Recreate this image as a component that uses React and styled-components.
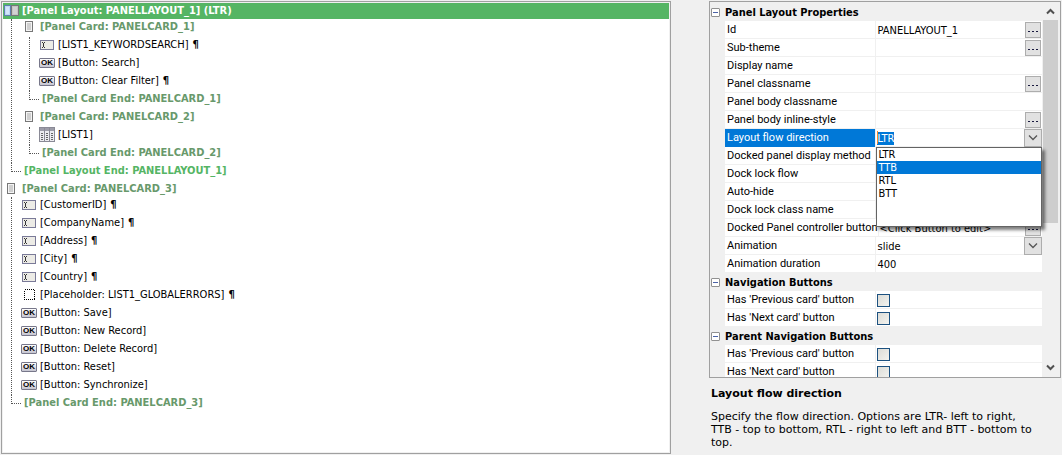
import styled, { createGlobalStyle } from 'styled-components';

const GlobalStyle = createGlobalStyle`
    * {
        box-sizing: border-box;
    }

    body {
        margin: 0;
        background: #f0f0f0;
        color: #000;
        font-family: Tahoma, "DejaVu Sans Condensed", "Noto Sans", sans-serif;
        font-size: 11px;
    }

    ul {
        margin: 0;
        padding: 0;
        list-style: none;
    }
`;

const Page = styled.main`
    display: grid;
    grid-template-columns: 670fr 352fr;
    column-gap: 38px;
    height: 100vh;
    padding: 1px;
`;

/* ---------- control tree ---------- */

const TreePanel = styled.section`
    min-width: 0;
    overflow: hidden;
    padding: 1px;
    border: 1px solid #a0a0a0;
    background: #fff;
    box-shadow: inset 0 0 0 1px #f0f0f0;
`;

const Branch = styled.ul`
    margin-left: 8px;
    padding-left: 9px;
    border-left: 1px dotted #555;
`;

const Row = styled.div`
    display: flex;
    align-items: center;
    height: ${({ $root }) => ($root ? '16px' : '18px')};
    padding-bottom: ${({ $root }) => ($root ? '1px' : '3px')};
    background: ${({ $selected }) => ($selected ? '#55b564' : 'transparent')};
    white-space: nowrap;
`;

const IconSlot = styled.span`
    display: flex;
    justify-content: center;
    flex: none;
    width: 16px;
    margin-right: 3px;

    svg {
        flex: none;
    }
`;

const Name = styled.span`
    color: ${({ $color }) => $color || '#000'};
    font-weight: ${({ $color }) => ($color ? 'bold' : 'normal')};
`;

const LineBreak = styled.span`
    margin-left: 4px;
    font-weight: bold;
`;

const EndRow = styled.div`
    display: flex;
    height: 18px;
    margin-left: 8px;
    line-height: 15px;
    white-space: nowrap;
`;

const Elbow = styled.span`
    width: 10px;
    height: 9px;
    margin-right: 3px;
    border-left: 1px dotted #555;
    border-bottom: 1px dotted #555;
`;

const GREEN = '#55b564';
const SAGE = '#68996b';

const LayoutIcon = () => (
    <svg width="15" height="11" viewBox="0 0 15 11" shapeRendering="crispEdges">
        <rect x="0.5" y="0.5" width="6" height="10" fill="#bcd8f5" stroke="#5f7fae" />
        <rect x="2" y="2" width="3" height="7" fill="#d3e6fa" />
        <rect x="7.5" y="0.5" width="7" height="10" fill="#c4c4c4" stroke="#777" />
        <rect x="9" y="2" width="4" height="7" fill="#d2d2d2" />
    </svg>
);

const CardIcon = () => (
    <svg width="8" height="11" viewBox="0 0 8 11" shapeRendering="crispEdges">
        <rect x="0.5" y="0.5" width="7" height="10" fill="#f4f4f4" stroke="#777" />
        <rect x="2" y="2" width="4" height="7" fill="#cfcfcf" />
    </svg>
);

const FieldIcon = () => (
    <svg width="14" height="10" viewBox="0 0 14 10" shapeRendering="crispEdges">
        <rect x="0.5" y="0.5" width="13" height="9" fill="#ecebe6" stroke="#7a7a98" />
        <path d="M2 2.5h1M4 2.5h1M3.5 3v4M2 7.5h1M4 7.5h1" stroke="#333" fill="none" />
    </svg>
);

const OkIcon = styled.span`
    flex: none;
    width: 16px;
    height: 10px;
    border: 1px solid #77778a;
    border-radius: 1px;
    background: linear-gradient(#fff, #c4c4d0);
    font: bold 8px/8px "Liberation Sans", sans-serif;
    text-align: center;
`;

const ListIcon = () => (
    <svg width="16" height="15" viewBox="0 0 16 15" shapeRendering="crispEdges">
        <rect x="0.5" y="0.5" width="15" height="14" fill="#ececf0" stroke="#8a8a96" />
        <rect x="1" y="1" width="14" height="3" fill="#9c9ca8" />
        <path d="M5.5 1v13M10.5 1v13" stroke="#8a8a96" />
        <path d="M2 6.5h2M7 6.5h2M12 6.5h2M2 8.5h2M7 8.5h2M12 8.5h2M2 10.5h2M7 10.5h2M12 10.5h2M2 12.5h2M7 12.5h2M12 12.5h2" stroke="#666" />
    </svg>
);

const PlaceholderIcon = () => (
    <svg width="11" height="11" viewBox="0 0 11 11" shapeRendering="crispEdges">
        <rect x="0.5" y="0.5" width="10" height="10" fill="none" stroke="#000" strokeDasharray="1 1" />
    </svg>
);

const icons = {
    layout: <LayoutIcon />,
    card: <CardIcon />,
    field: <FieldIcon />,
    button: <OkIcon>OK</OkIcon>,
    list: <ListIcon />,
    placeholder: <PlaceholderIcon />,
};

const tree = [
    {
        icon: 'layout',
        name: '[Panel Layout: PANELLAYOUT_1] (LTR)',
        color: '#fff',
        selected: true,
        end: '[Panel Layout End: PANELLAYOUT_1]',
        endColor: GREEN,
        children: [
            {
                icon: 'card',
                name: '[Panel Card: PANELCARD_1]',
                color: SAGE,
                end: '[Panel Card End: PANELCARD_1]',
                endColor: SAGE,
                children: [
                    { icon: 'field', name: '[LIST1_KEYWORDSEARCH]', lineBreak: true },
                    { icon: 'button', name: '[Button: Search]' },
                    { icon: 'button', name: '[Button: Clear Filter]', lineBreak: true },
                ],
            },
            {
                icon: 'card',
                name: '[Panel Card: PANELCARD_2]',
                color: SAGE,
                end: '[Panel Card End: PANELCARD_2]',
                endColor: SAGE,
                children: [{ icon: 'list', name: '[LIST1]' }],
            },
        ],
    },
    {
        icon: 'card',
        name: '[Panel Card: PANELCARD_3]',
        color: SAGE,
        end: '[Panel Card End: PANELCARD_3]',
        endColor: SAGE,
        children: [
            { icon: 'field', name: '[CustomerID]', lineBreak: true },
            { icon: 'field', name: '[CompanyName]', lineBreak: true },
            { icon: 'field', name: '[Address]', lineBreak: true },
            { icon: 'field', name: '[City]', lineBreak: true },
            { icon: 'field', name: '[Country]', lineBreak: true },
            { icon: 'placeholder', name: '[Placeholder: LIST1_GLOBALERRORS]', lineBreak: true },
            { icon: 'button', name: '[Button: Save]' },
            { icon: 'button', name: '[Button: New Record]' },
            { icon: 'button', name: '[Button: Delete Record]' },
            { icon: 'button', name: '[Button: Reset]' },
            { icon: 'button', name: '[Button: Synchronize]' },
        ],
    },
];

function TreeNode({ node, root }) {
    return (
        <li>
            <Row $root={root} $selected={node.selected}>
                <IconSlot>{icons[node.icon]}</IconSlot>
                <Name $color={node.color}>{node.name}</Name>
                {node.lineBreak && <LineBreak>¶</LineBreak>}
            </Row>
            {node.children && (
                <>
                    <Branch>
                        {node.children.map((child) => (
                            <TreeNode key={child.name} node={child} />
                        ))}
                    </Branch>
                    <EndRow>
                        <Elbow />
                        <Name $color={node.endColor}>{node.end}</Name>
                    </EndRow>
                </>
            )}
        </li>
    );
}

/* ---------- property sheet ---------- */

const Side = styled.section`
    display: flex;
    flex-direction: column;
    min-width: 0;
    min-height: 0;
`;

const Sheet = styled.div`
    display: flex;
    flex: 1;
    min-height: 0;
    overflow: hidden;
    padding: 1px;
    border: 1px solid #a0a0a0;
`;

const Properties = styled.div`
    flex: 1;
    min-width: 0;
`;

const GroupTitle = styled.h2`
    display: flex;
    align-items: center;
    gap: 5px;
    height: 18px;
    margin: 0;
    font-size: 11px;
    white-space: nowrap;
`;

const Toggle = styled.button`
    display: flex;
    align-items: center;
    justify-content: center;
    width: 9px;
    height: 9px;
    padding: 0;
    border: 1px solid #919191;
    border-radius: 1px;
    background: #fff;

    &::before {
        content: '';
        width: 5px;
        height: 1px;
        background: #4b63a7;
    }
`;

const Property = styled.div`
    display: grid;
    grid-template-columns: 150fr 166fr;
    height: 18px;
    margin-left: 14px;
    border-bottom: 1px solid #f0f0f0;
    background: #fff;
`;

const Label = styled.label`
    padding-left: 2px;
    font-family: Tahoma, Roboto, sans-serif;
    line-height: 18px;
    white-space: nowrap;
    background: ${({ $active }) => ($active ? '#0078d7' : 'transparent')};
    color: ${({ $active }) => ($active ? '#fff' : '#000')};
`;

const Value = styled.div`
    position: relative;
    display: flex;
    align-items: center;
    min-width: 0;
    border-left: 1px solid #f0f0f0;
`;

const TextBox = styled.input`
    flex: 1;
    min-width: 0;
    height: 17px;
    padding: 0 0 0 1px;
    border: 0;
    outline: none;
    background: transparent;
    color: #000;
    font: inherit;

    &::selection {
        background: #0078d7;
        color: #fff;
    }
`;

const DropDown = styled.select`
    flex: 1;
    min-width: 0;
    height: 17px;
    padding: 0 0 0 1px;
    border: 0;
    appearance: none;
    background: transparent;
    color: #000;
    font: inherit;
`;

const CheckBox = styled.input`
    width: 13px;
    height: 13px;
    margin: 0 0 0 1px;
    border: 1px solid #1c5180;
    appearance: none;
    background: linear-gradient(135deg, #dcdcd7, #f3f3ef);
`;

const DotsButton = styled.button`
    display: flex;
    align-items: center;
    justify-content: center;
    gap: 2px;
    width: 16px;
    height: 16px;
    margin-right: 1px;
    padding: 2px 0 0;
    border: 1px solid #adadad;
    background: #e1e1e1;

    i {
        width: 2px;
        height: 1px;
        background: #1a1a40;
    }
`;

const ArrowBox = styled.span`
    display: flex;
    align-items: center;
    justify-content: center;
    flex: none;
    width: 18px;
    height: 18px;
    padding: 0;
    border: 1px solid #adadad;
    background: #e1e1e1;
`;

const Caret = styled.span`
    position: absolute;
    left: 1px;
    top: 2px;
    width: 1px;
    height: 13px;
    background: #ff8728;
`;

const Popup = styled.ul`
    position: absolute;
    z-index: 1;
    top: 18px;
    left: 0;
    right: 0;
    height: 80px;
    border: 1px solid #646464;
    background: #fff;
    box-shadow: 3px 3px 3px rgba(0, 0, 0, 0.5);
`;

const Option = styled.li`
    padding-left: 1px;
    line-height: 13px;
    background: ${({ $active }) => ($active ? '#0078d7' : 'transparent')};
    color: ${({ $active }) => ($active ? '#fff' : '#000')};
`;

const ScrollBar = styled.div`
    display: flex;
    flex-direction: column;
    flex: none;
    width: 17px;
    background: #f0f0f0;
`;

const ScrollButton = styled.button`
    display: flex;
    align-items: center;
    justify-content: center;
    flex: none;
    height: 17px;
    padding: 0;
    border: 0;
    background: transparent;
`;

const Track = styled.div`
    flex: 1;
    min-height: 0;
`;

const Thumb = styled.div`
    width: 15px;
    height: 60%;
    margin-left: 1px;
    background: #cdcdcd;
`;

const Help = styled.div`
    flex: none;
    padding: 9px 10px 5px 2px;
    font-family: Verdana, "DejaVu Sans", sans-serif;
    line-height: 13px;
`;

const HelpTitle = styled.h3`
    margin: 0 0 10px;
    font-size: 11px;
`;

const HelpText = styled.p`
    margin: 0;
`;

const groups = [
    {
        title: 'Panel Layout Properties',
        rows: [
            { label: 'Id', value: 'PANELLAYOUT_1', dots: true },
            { label: 'Sub-theme', dots: true },
            { label: 'Display name' },
            { label: 'Panel classname', dots: true },
            { label: 'Panel body classname' },
            { label: 'Panel body inline-style', dots: true },
            { label: 'Layout flow direction', kind: 'combo', value: 'LTR', options: ['LTR', 'TTB', 'RTL', 'BTT'] },
            { label: 'Docked panel display method' },
            { label: 'Dock lock flow' },
            { label: 'Auto-hide' },
            { label: 'Dock lock class name' },
            { label: 'Docked Panel controller button', value: '<Click Button to edit>', dots: true },
            { label: 'Animation', kind: 'select', value: 'slide' },
            { label: 'Animation duration', value: '400' },
        ],
    },
    {
        title: 'Navigation Buttons',
        rows: [
            { label: "Has 'Previous card' button", kind: 'check' },
            { label: "Has 'Next card' button", kind: 'check' },
        ],
    },
    {
        title: 'Parent Navigation Buttons',
        rows: [
            { label: "Has 'Previous card' button", kind: 'check' },
            { label: "Has 'Next card' button", kind: 'check' },
        ],
    },
];

const DownArrow = () => (
    <svg width="10" height="6" viewBox="0 0 10 6">
        <path d="M1 0.5l4 4 4-4" fill="none" stroke="#555" strokeWidth="1.3" />
    </svg>
);

const ScrollArrow = ({ up }) => (
    <svg width="9" height="7" viewBox="0 0 9 7">
        <path d={up ? 'M1 5.5l3.5-3.5 3.5 3.5' : 'M1 1.5l3.5 3.5 3.5-3.5'} fill="none" stroke="#505050" strokeWidth="2" />
    </svg>
);

function Combo({ id, row }) {
    // the open editor keeps its whole value selected
    const selectAll = (el) => {
        if (el) {
            el.focus();
            el.select();
        }
    };

    return (
        <>
            <TextBox id={id} ref={selectAll} role="combobox" aria-expanded="true" defaultValue={row.value} />
            <Caret />
            <ArrowBox as="button" aria-label="Close list">
                <DownArrow />
            </ArrowBox>
            <Popup role="listbox">
                {row.options.map((option) => (
                    <Option key={option} role="option" $active={option === 'TTB'}>
                        {option}
                    </Option>
                ))}
            </Popup>
        </>
    );
}

function Editor({ id, row }) {
    if (row.kind === 'combo') return <Combo id={id} row={row} />;
    if (row.kind === 'check') return <CheckBox id={id} type="checkbox" />;
    if (row.kind === 'select') {
        return (
            <>
                <DropDown id={id}>
                    <option>{row.value}</option>
                </DropDown>
                <ArrowBox>
                    <DownArrow />
                </ArrowBox>
            </>
        );
    }
    return (
        <>
            <TextBox id={id} type="text" defaultValue={row.value} />
            {row.dots && (
                <DotsButton aria-label={`Edit ${row.label}`}>
                    <i />
                    <i />
                    <i />
                </DotsButton>
            )}
        </>
    );
}

export default function App() {
    return (
        <>
            <GlobalStyle />
            <Page>
                <TreePanel>
                    <ul>
                        {tree.map((node) => (
                            <TreeNode key={node.name} node={node} root />
                        ))}
                    </ul>
                </TreePanel>

                <Side>
                    <Sheet>
                        <Properties>
                            {groups.map((group, g) => (
                                <div key={group.title}>
                                    <GroupTitle>
                                        <Toggle aria-label={`Collapse ${group.title}`} />
                                        {group.title}
                                    </GroupTitle>
                                    {group.rows.map((row, r) => (
                                        <Property key={row.label}>
                                            <Label htmlFor={`prop-${g}-${r}`} $active={row.kind === 'combo'}>
                                                {row.label}
                                            </Label>
                                            <Value>
                                                <Editor id={`prop-${g}-${r}`} row={row} />
                                            </Value>
                                        </Property>
                                    ))}
                                </div>
                            ))}
                        </Properties>
                        <ScrollBar>
                            <ScrollButton aria-label="Scroll up">
                                <ScrollArrow up />
                            </ScrollButton>
                            <Track>
                                <Thumb />
                            </Track>
                            <ScrollButton aria-label="Scroll down">
                                <ScrollArrow />
                            </ScrollButton>
                        </ScrollBar>
                    </Sheet>
                    <Help>
                        <HelpTitle>Layout flow direction</HelpTitle>
                        <HelpText>
                            Specify the flow direction. Options are LTR- left to right,
                            <br />
                            TTB - top to bottom, RTL - right to left and BTT - bottom to top.
                        </HelpText>
                    </Help>
                </Side>
            </Page>
        </>
    );
}
